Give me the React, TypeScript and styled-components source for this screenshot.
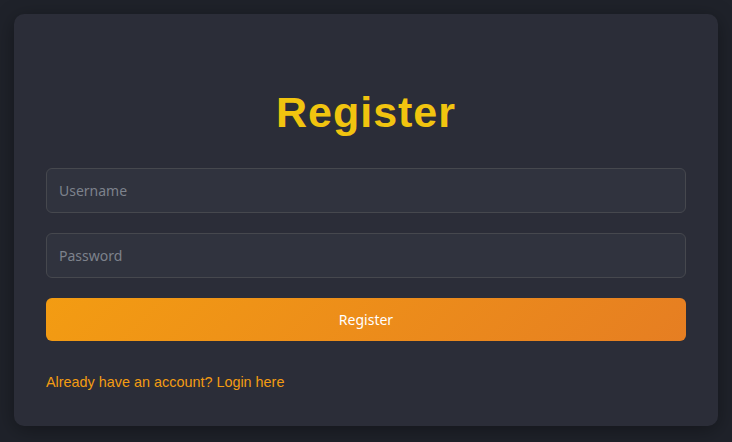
import * as React from 'react';
import styled, { createGlobalStyle } from 'styled-components';

const GlobalStyle = createGlobalStyle`
  html, body {
    margin: 0;
    padding: 0;
    background: #1f222a;
  }
  * { box-sizing: border-box; }
`;

const Page = styled.div`
  width: 100%;
  height: 100vh;
  padding: 14px;
  background: #1f222a;
`;

const Card = styled.div`
  height: 412px;
  background: #2b2d38;
  border-radius: 10px;
  box-shadow: 0 4px 20px rgba(0, 0, 0, 0.35);
  padding: 74px 32px 0;
  display: flex;
  flex-direction: column;
`;

const Title = styled.h1`
  margin: 0 0 31px;
  text-align: center;
  font-family: 'Liberation Sans', Arial, sans-serif;
  font-weight: 700;
  font-size: 43px;
  letter-spacing: 1px;
  color: #f1c40f;
`;

const Form = styled.form`
  display: flex;
  flex-direction: column;
  gap: 20px;
`;

const Input = styled.input`
  height: 45px;
  padding: 0 12px;
  border: 1px solid #46484e;
  border-radius: 6px;
  background: #30333e;
  color: #e0e0e0;
  font-family: 'Noto Sans', sans-serif;
  font-size: 14px;
  outline: none;

  &::placeholder {
    color: #7d828c;
  }
`;

const Button = styled.button`
  height: 43px;
  border: none;
  border-radius: 6px;
  background: linear-gradient(135deg, #f39c12, #e67e22);
  color: #ffffff;
  font-family: 'Noto Sans', sans-serif;
  font-size: 14px;
  cursor: pointer;
`;

const Footer = styled.p`
  margin: 33px 0 0;
  font-family: 'Liberation Sans', Arial, sans-serif;
  font-size: 14.4px;
  color: #f39c12;
`;

export default function App() {
  return (
    <>
      <GlobalStyle />
      <Page>
        <Card>
          <Title>Register</Title>
          <Form onSubmit={(e) => e.preventDefault()}>
            <Input type="text" placeholder="Username" />
            <Input type="password" placeholder="Password" />
            <Button type="submit">Register</Button>
          </Form>
          <Footer>Already have an account? Login here</Footer>
        </Card>
      </Page>
    </>
  );
}
